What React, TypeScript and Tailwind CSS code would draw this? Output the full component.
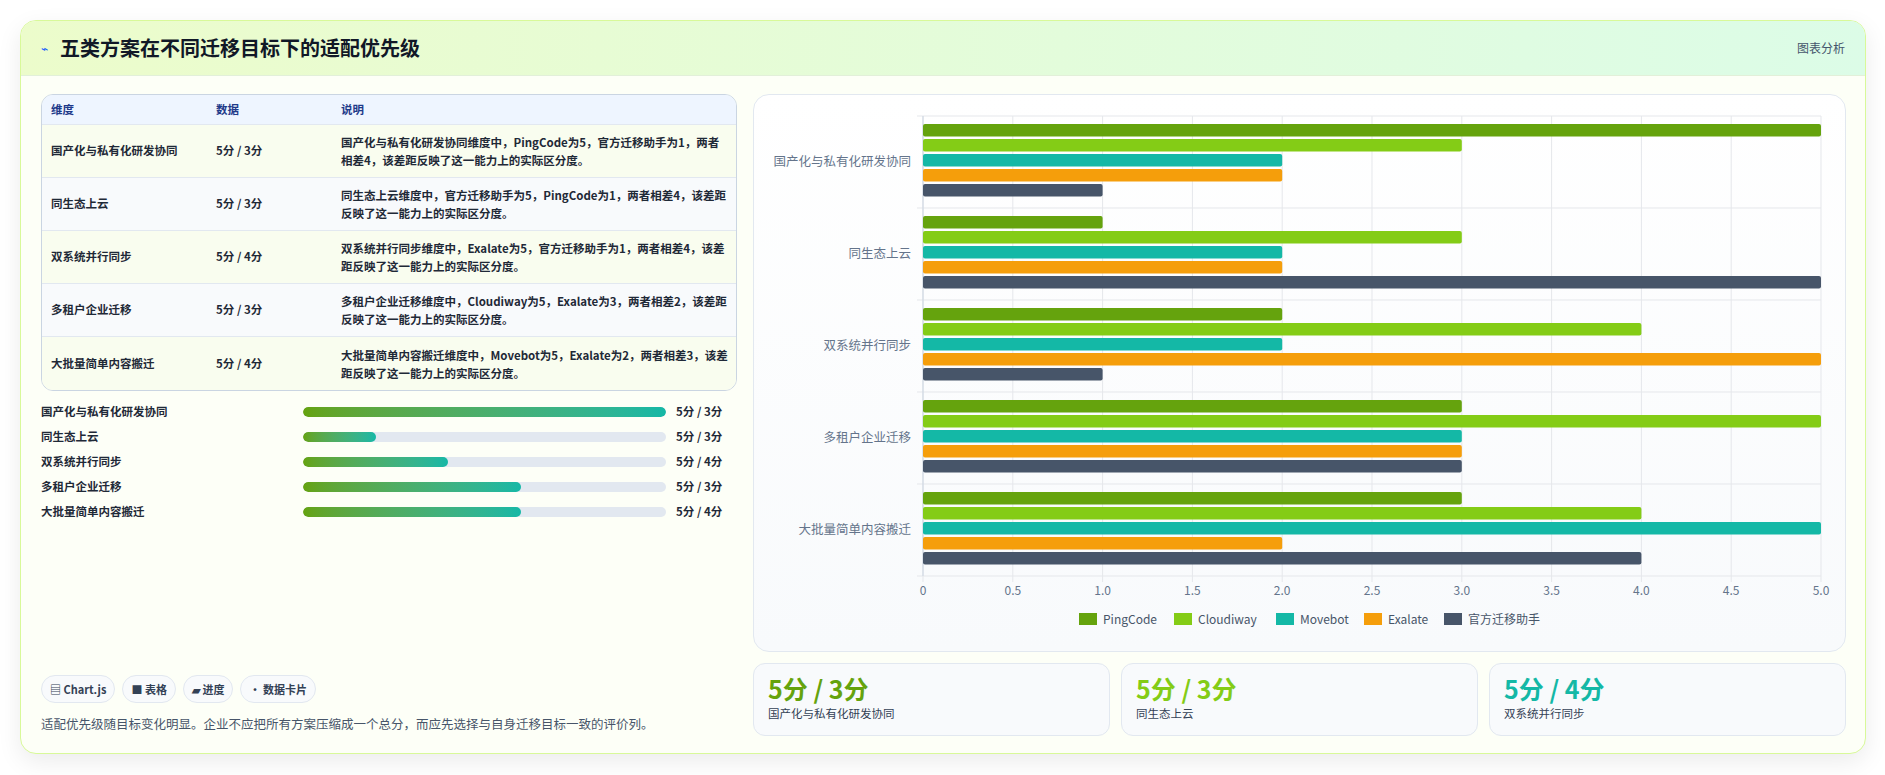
import React from "react";

const rows = [
  ["国产化与私有化研发协同", "5分 / 3分", "国产化与私有化研发协同维度中，PingCode为5，官方迁移助手为1，两者相差4，该差距反映了这一能力上的实际区分度。"],
  ["同生态上云", "5分 / 3分", "同生态上云维度中，官方迁移助手为5，PingCode为1，两者相差4，该差距反映了这一能力上的实际区分度。"],
  ["双系统并行同步", "5分 / 4分", "双系统并行同步维度中，Exalate为5，官方迁移助手为1，两者相差4，该差距反映了这一能力上的实际区分度。"],
  ["多租户企业迁移", "5分 / 3分", "多租户企业迁移维度中，Cloudiway为5，Exalate为3，两者相差2，该差距反映了这一能力上的实际区分度。"],
  ["大批量简单内容搬迁", "5分 / 4分", "大批量简单内容搬迁维度中，Movebot为5，Exalate为2，两者相差3，该差距反映了这一能力上的实际区分度。"],
];
const prog = [100, 20, 40, 60, 60];
const colors = ["#65a30d", "#84cc16", "#14b8a6", "#f59e0b", "#475569"];
const names = ["PingCode", "Cloudiway", "Movebot", "Exalate", "官方迁移助手"];
const data = [
  [5, 3, 2, 2, 1],
  [1, 3, 2, 2, 5],
  [2, 4, 2, 5, 1],
  [3, 5, 3, 3, 3],
  [3, 4, 5, 2, 4],
];
const font = { fontFamily: '"Noto Sans CJK SC", "Noto Sans", sans-serif' };

function Chart() {
  const L = 169, R = 1067, T = 21, B = 481;
  const gh = (B - T) / 5;
  const sx = (v: number) => L + ((R - L) * v) / 5;
  return (
    <svg width="1093" height="558" style={font}>
      {Array.from({ length: 11 }).map((_, i) => (
        <g key={i}>
          <line x1={sx(i * 0.5)} x2={sx(i * 0.5)} y1={T} y2={B + 6} stroke="#e5e7eb" />
          <text x={sx(i * 0.5)} y={B + 19} fontSize="12" fill="#64748b" textAnchor="middle">
            {i === 0 ? "0" : (i * 0.5).toFixed(1)}
          </text>
        </g>
      ))}
      {Array.from({ length: 6 }).map((_, i) => (
        <line key={i} x1={L - 6} x2={R} y1={T + i * gh} y2={T + i * gh} stroke="#e5e7eb" />
      ))}
      <line x1={L} x2={L} y1={T} y2={B} stroke="#cbd5e1" />
      {data.map((g, gi) => (
        <g key={gi}>
          <text x={L - 12} y={T + gi * gh + gh / 2 + 4} fontSize="12.5" fill="#64748b" textAnchor="end">
            {rows[gi][0]}
          </text>
          {g.map((v, bi) => (
            <rect key={bi} x={L} y={T + gi * gh + 8 + bi * 15} width={sx(v) - L} height="12.5" rx="2" fill={colors[bi]} />
          ))}
        </g>
      ))}
      {(() => {
        let x = 325;
        const w = [95, 102, 88, 80, 110];
        return names.map((n, i) => {
          const el = (
            <g key={i}>
              <rect x={x} y={518} width="18" height="12" fill={colors[i]} />
              <text x={x + 24} y={529} fontSize="12" fill="#475569">{n}</text>
            </g>
          );
          x += w[i];
          return el;
        });
      })()}
    </svg>
  );
}

export default function App() {
  return (
    <div className="w-[1885px] h-[775px] bg-white pt-[20px] pl-[20px]" style={font}>
      <div className="w-[1846px] h-[734px] rounded-2xl border border-lime-200 bg-[#fdfff7] shadow-[0_8px_24px_rgba(0,0,0,0.08)] overflow-hidden flex flex-col">
        <div className="h-[55px] shrink-0 flex items-center justify-between px-[20px] bg-gradient-to-r from-[#ecfccb] to-[#dcfce7] border-b border-[#e2f0d9]">
          <div className="flex items-center gap-3">
            <span className="text-[12px] text-blue-600">⌁</span>
            <span className="text-[20px] font-bold text-[#111827]">五类方案在不同迁移目标下的适配优先级</span>
          </div>
          <span className="text-[12px] text-slate-600">图表分析</span>
        </div>
        <div className="flex gap-[16px] pl-[20px] pr-[19px] pt-[18px]">
          <div className="w-[697px] h-[636px] flex flex-col">
            <div className="rounded-xl border border-slate-300 overflow-hidden text-[11.5px] text-[#1f2937]">
              <div className="flex h-[30px] items-center bg-[#eef5ff] border-b border-slate-200 text-[#1e3a8a] font-semibold">
                <div className="w-[174px] pl-[9px]">维度</div>
                <div className="w-[125px]">数据</div>
                <div className="flex-1">说明</div>
              </div>
              {rows.map((r, i) => (
                <div key={i} className={`flex h-[53px] items-center border-b border-slate-200 last:border-b-0 ${i % 2 ? "bg-[#f8fafc]" : "bg-[#f9fdef]"}`}>
                  <div className="w-[174px] pl-[9px] font-semibold">{r[0]}</div>
                  <div className="w-[125px] font-semibold">{r[1]}</div>
                  <div className="flex-1 pr-[8px] leading-[18px] font-semibold">{r[2]}</div>
                </div>
              ))}
            </div>
            <div className="mt-[8px] flex flex-col">
              {rows.map((r, i) => (
                <div key={i} className="flex items-center h-[25px] text-[11.5px] font-semibold text-[#1f2937]">
                  <div className="w-[262px]">{r[0]}</div>
                  <div className="w-[363px] h-[10px] rounded-full bg-[#e2e8f0] overflow-hidden">
                    <div className="h-full rounded-full bg-gradient-to-r from-[#65a30d] to-[#14b8a6]" style={{ width: `${prog[i]}%` }} />
                  </div>
                  <div className="ml-[10px] font-bold">{r[1]}</div>
                </div>
              ))}
            </div>
            <div className="mt-auto mb-[-4px]">
              <div className="flex gap-[7px] text-[11px] font-semibold text-[#334155]">
                {["▤ Chart.js", "■ 表格", "▰ 进度", "• 数据卡片"].map((c) => (
                  <div key={c} className="h-[28px] px-[8px] flex items-center rounded-full border border-slate-200 bg-[#f8fafc]">{c}</div>
                ))}
              </div>
              <div className="mt-[12px] text-[12.5px] text-[#475569]">适配优先级随目标变化明显。企业不应把所有方案压缩成一个总分，而应先选择与自身迁移目标一致的评价列。</div>
            </div>
          </div>
          <div className="w-[1093px] flex flex-col gap-[11px]">
            <div className="h-[558px] rounded-2xl border border-slate-200 bg-gradient-to-b from-white to-[#f8fafc] overflow-hidden">
              <Chart />
            </div>
            <div className="grid grid-cols-3 gap-[11px]">
              {[0, 1, 2].map((i) => (
                <div key={i} className="h-[73px] rounded-xl border border-slate-200 bg-[#f8fafc] px-[14px] pt-[8px]">
                  <div className="text-[25px] font-bold leading-[32px]" style={{ color: colors[i] }}>{rows[i][1]}</div>
                  <div className="text-[11.5px] text-[#334155] mt-[1px]">{rows[i][0]}</div>
                </div>
              ))}
            </div>
          </div>
        </div>
      </div>
    </div>
  );
}
